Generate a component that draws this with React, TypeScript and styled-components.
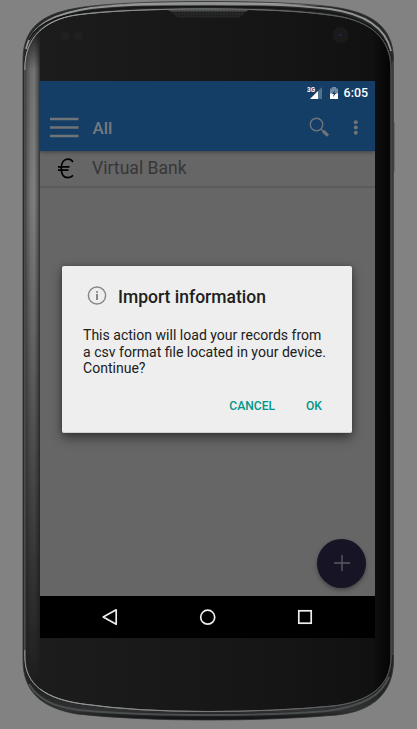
import React from "react";
import styled, { createGlobalStyle } from "styled-components";

const GlobalStyle = createGlobalStyle`
  *, *::before, *::after { box-sizing: border-box; }
  body { margin: 0; background: #828282; overflow: hidden; }
`;

const Stage = styled.main`
  position: relative;
  width: 417px;
  height: 729px;
  padding: 81px 42px 91px 40px;
  background: #828282;
  font-family: Roboto, "Liberation Sans", sans-serif;
`;

const PhoneShell = styled.svg`
  position: absolute;
  inset: 0;
`;

const Screen = styled.div`
  position: relative;
  display: flex;
  flex-direction: column;
  width: 335px;
  height: 557px;
  background: #666;
  overflow: hidden;
`;

const StatusBar = styled.div`
  display: flex;
  justify-content: flex-end;
  align-items: center;
  height: 23px;
  flex: none;
  padding-right: 7px;
  background: #153e66;
  color: #fff;
  font-size: 12.4px;
  font-weight: 500;
  z-index: 2;
`;

const StatusIcons = styled.svg`
  margin-right: 3px;
`;

const AppBar = styled.header`
  display: flex;
  align-items: center;
  height: 47px;
  flex: none;
  padding: 0 14px 0 10px;
  background: #153e66;
  box-shadow: 0 1px 4px rgba(0, 0, 0, 0.4);
  color: #6f7479;
  z-index: 1;
`;

const BarTitle = styled.h1`
  flex: 1;
  margin: 0 0 0 13.5px;
  font-size: 17px;
  line-height: 20px;
  font-weight: 500;
  color: #75797e;
`;

const IconButton = styled.button<{ $gap?: number }>`
  display: flex;
  padding: 0;
  border: 0;
  margin-left: ${({ $gap }) => $gap ?? 0}px;
  background: none;
  color: inherit;
`;

const AccountRow = styled.div`
  display: flex;
  align-items: center;
  height: 37px;
  flex: none;
  padding: 0 0 1px 17px;
  border-bottom: 2px solid #5b5b5b;
  color: #373737;
`;

const AccountName = styled.span`
  margin-left: 17px;
  font-size: 17.6px;
  line-height: 20px;
`;

const Content = styled.section`
  display: flex;
  flex: 1;
  flex-direction: column;
`;

const AddButton = styled.button`
  display: grid;
  place-items: center;
  width: 49px;
  height: 49px;
  margin: auto 9px 8.5px auto;
  padding: 0;
  border: 0;
  border-radius: 50%;
  background: #171425;
  box-shadow: 0 2px 4px rgba(0, 0, 0, 0.35);
`;

const NavBar = styled.nav`
  display: flex;
  align-items: center;
  justify-content: space-between;
  height: 42px;
  flex: none;
  padding: 0 61px;
  background: #000;
`;

const Dialog = styled.div`
  position: absolute;
  top: 185px;
  left: 22px;
  z-index: 2;
  display: flex;
  flex-direction: column;
  width: 290px;
  height: 167px;
  padding: 18px 22px 17.5px 21px;
  border-radius: 2px;
  border-bottom: 1px solid #d0d0d0;
  background: #eee;
  box-shadow: 0 5px 12px rgba(0, 0, 0, 0.45), 0 0 5px rgba(0, 0, 0, 0.22);
`;

const DialogHeader = styled.div`
  display: flex;
  align-items: center;
  height: 22px;
  padding-left: 4px;
`;

const DialogTitle = styled.h2`
  margin: 3px 0 0 11px;
  font-size: 17.5px;
  line-height: 20px;
  font-weight: 500;
  color: #202020;
  white-space: nowrap;
`;

const Message = styled.p`
  margin: 21px 0 0;
  font-size: 14.05px;
  line-height: 16.6px;
  color: #202020;
  white-space: nowrap;
`;

const Actions = styled.div`
  display: flex;
  justify-content: flex-end;
  gap: 31px;
  margin-top: auto;
  padding-right: 8px;
`;

const ActionButton = styled.button`
  padding: 0;
  border: 0;
  background: none;
  font: 500 12.1px/18px Roboto, sans-serif;
  color: #009688;
`;

const OUTER =
  "M23 100V60C23 24 47 12 84 7Q125 1.5 208 1.5Q291 1.5 333 7C369 12 393.5 25 393.5 60V661C393 692 374 711 337 715Q280 720 208 720Q132 720 77 714C42 708 23 692 23 660Z";
const INNER =
  "M25 100V68C25 38 44 20 76 15Q120 9 208 9Q292 9 336 16C371 21 391 39 391 69V657C391 687 368 702 333 706Q275 711.5 208 711.5Q135 711.5 83 704C46 699 25 685 25 657Z";

function Phone() {
  return (
    <PhoneShell width="417" height="729" viewBox="0 0 417 729" aria-hidden="true">
      <defs>
        <linearGradient id="rim" x1="0" y1="0" x2="0" y2="729" gradientUnits="userSpaceOnUse">
          <stop offset="0" stopColor="#4b4c4b" />
          <stop offset=".005" stopColor="#a4a5a3" />
          <stop offset=".009" stopColor="#252625" />
          <stop offset=".04" stopColor="#272828" />
          <stop offset=".95" stopColor="#222424" />
          <stop offset=".975" stopColor="#303233" />
          <stop offset=".99" stopColor="#080909" />
        </linearGradient>
        <linearGradient id="face" x1="24" x2="393" y1="0" y2="0" gradientUnits="userSpaceOnUse">
          <stop offset="0" stopColor="#1d1e1e" />
          <stop offset=".05" stopColor="#1c1c1c" />
          <stop offset=".7" stopColor="#151515" />
          <stop offset=".94" stopColor="#111" />
          <stop offset="1" stopColor="#030303" />
        </linearGradient>
        <linearGradient id="sheen" x1="25" x2="40" y1="0" y2="0" gradientUnits="userSpaceOnUse">
          <stop offset="0" stopColor="#4b4c4c" />
          <stop offset=".15" stopColor="#626363" />
          <stop offset=".4" stopColor="#808181" />
          <stop offset=".62" stopColor="#888989" />
          <stop offset=".85" stopColor="#5e5f5f" />
          <stop offset="1" stopColor="#303030" />
        </linearGradient>
        <linearGradient id="shade" x1="0" x2="0" y1="30" y2="690" gradientUnits="userSpaceOnUse">
          <stop offset="0" stopColor="#1c1c1c" />
          <stop offset=".06" stopColor="#1c1c1c" stopOpacity=".2" />
          <stop offset=".25" stopColor="#1c1c1c" stopOpacity=".08" />
          <stop offset=".48" stopColor="#1c1c1c" stopOpacity=".35" />
          <stop offset=".8" stopColor="#1c1c1c" stopOpacity=".75" />
          <stop offset="1" stopColor="#1c1c1c" />
        </linearGradient>
        <linearGradient id="line" x1="24" y1="0" x2="393" y2="0" gradientUnits="userSpaceOnUse">
          <stop offset="0" stopColor="#a5a7a5" />
          <stop offset=".5" stopColor="#777a7b" />
          <stop offset="1" stopColor="#505252" />
        </linearGradient>
        <clipPath id="faceClip"><path d={INNER} /></clipPath>
        <pattern id="mesh" width="3" height="3" patternUnits="userSpaceOnUse">
          <rect width="3" height="3" fill="#242524" />
          <path d="M0 0h1v1H0z" fill="#181818" />
        </pattern>
      </defs>
      <rect x="391.5" y="122" width="2.8" height="50" rx="1" fill="#333" />
      <path d={OUTER} fill="url(#rim)" stroke="#303131" strokeWidth=".8" />
      <path d="M26 49C32 23 57 13 91 8Q132 3.5 208 3.5Q285 3.5 330 9C366 14 386 29 391 51" fill="none" stroke="#949694" strokeWidth="1.8" />
      <path d="M29 40C39 20 65 14 97 10.5Q135 6.5 208 6.5Q284 6.5 328 12C363 18 382 30 389 50" fill="none" stroke="#141515" strokeWidth="1.6" />
      <path d="M29 684C40 703 61 709 90 711Q140 715 208 715Q278 715 327 711C363 706 381 696 389 677" fill="none" stroke="#4b4e4f" strokeWidth="2" />
      <path d={INNER} fill="url(#face)" stroke="url(#line)" strokeWidth="1" />
      <g clipPath="url(#faceClip)">
        <rect x="25" y="30" width="15" height="660" fill="url(#sheen)" />
        <rect x="25" y="30" width="15" height="660" fill="url(#shade)" />
        <path d="M168 9H249L245 12Q242 17.5 237 17.5H181Q175 17.5 173 13Z" fill="url(#mesh)" />
        <path d="M165 9H251L246 11.5H171Z" fill="#4a4c4c" />
      </g>
      <path d={INNER} fill="none" stroke="url(#line)" strokeWidth=".8" />
      <path d="M25 70V650" stroke="#2b2c2c" strokeWidth="1.2" />
      <path d="M23.5 60V655" stroke="#292a29" strokeWidth="1" />
      <path d="M393 61V655" stroke="#525353" strokeWidth="1" />
      <circle cx="65" cy="35.5" r="4.5" fill="#202020" />
      <circle cx="78.5" cy="35.5" r="4.5" fill="#202020" />
      <circle cx="340.5" cy="35" r="8" fill="#1a1a1b" />
      <circle cx="340.5" cy="35" r="3" fill="#191922" />
      <circle cx="340.5" cy="35" r="1.2" fill="#292647" />
    </PhoneShell>
  );
}

export default function App() {
  return (
    <>
      <GlobalStyle />
      <Stage>
        <Phone />
        <Screen>
          <StatusBar>
            <StatusIcons width="34" height="16" viewBox="0 0 34 16">
              <text x="0" y="7" fontSize="7.5" fontWeight="700" fill="#fff" textLength="8" lengthAdjust="spacingAndGlyphs">3G</text>
              <path d="M3 14 15 2v12Z" fill="#53718e" />
              <path d="M3 14 11 6v8Z" fill="#fff" />
              <path d="M25 2h4v1.5h2V14h-8V3.5h2Z" fill="#718aa2" />
              <path d="M23 8.5h8V14h-8Z" fill="#fff" />
              <path d="M28 5 25 9h1.8L26 12l3.3-4h-2Z" fill="#153e66" />
            </StatusIcons>
            <span>6:05</span>
          </StatusBar>
          <AppBar>
            <IconButton aria-label="Menu">
              <svg width="29" height="22" viewBox="0 0 29 22">
                <path d="M0 2h28.5M0 10.5h28.5M0 19h28.5" stroke="currentColor" strokeWidth="2.3" />
              </svg>
            </IconButton>
            <BarTitle>All</BarTitle>
            <IconButton aria-label="Search">
              <svg width="21" height="21" viewBox="0 0 21 21" fill="none" stroke="currentColor">
                <circle cx="7.5" cy="7.5" r="6.2" strokeWidth="1.4" />
                <path d="m12 12 3 3" strokeWidth="1.5" />
                <path d="m14 14 5 4.7" strokeWidth="3.2" />
              </svg>
            </IconButton>
            <IconButton aria-label="More options" $gap={21}>
              <svg width="10" height="16" viewBox="0 0 10 16" fill="currentColor">
                <circle cx="4.8" cy="2.2" r="2" /><circle cx="4.8" cy="7.5" r="2" /><circle cx="4.8" cy="12.8" r="2" />
              </svg>
            </IconButton>
          </AppBar>
          <AccountRow>
            <svg width="18" height="22" viewBox="0 0 18 22" fill="none" stroke="#000" strokeWidth="1.7">
              <path d="M16 5C14.6 3 13 2.2 11 2.2 7 2.2 4.3 5.5 4.3 11.4s2.7 9.2 6.7 9.2c2 0 3.6-.6 5-2.2M1 9.8h11.5M1 13.2h10.5" />
            </svg>
            <AccountName>Virtual Bank</AccountName>
          </AccountRow>
          <Content>
            <AddButton aria-label="Add">
              <svg width="16" height="16" viewBox="0 0 16 16"><path d="M8 0v16M0 8h16" stroke="#5b5963" strokeWidth="1.4" /></svg>
            </AddButton>
          </Content>
          <NavBar>
            <IconButton aria-label="Back">
              <svg width="18" height="18" viewBox="0 0 18 18" fill="none" stroke="#eee" strokeWidth="1.7" strokeLinejoin="round"><path d="M15.2 1.8v14.4L2.2 9Z" /></svg>
            </IconButton>
            <IconButton aria-label="Home">
              <svg width="18" height="18" viewBox="0 0 18 18" fill="none" stroke="#eee" strokeWidth="1.7"><circle cx="8.7" cy="9.2" r="7" /></svg>
            </IconButton>
            <IconButton aria-label="Recent apps">
              <svg width="18" height="18" viewBox="0 0 18 18" fill="none" stroke="#eee" strokeWidth="1.7"><rect x="2.8" y="2.8" width="12.4" height="12.4" /></svg>
            </IconButton>
          </NavBar>
          <Dialog role="dialog" aria-labelledby="dialog-title">
            <DialogHeader>
              <svg width="20" height="20" viewBox="0 0 20 20" fill="none">
                <circle cx="10" cy="10.5" r="8.6" stroke="#888" strokeWidth="1.5" />
                <circle cx="10" cy="7" r="1.1" fill="#888" /><path d="M10 9v6" stroke="#888" strokeWidth="2" />
              </svg>
              <DialogTitle id="dialog-title">Import information</DialogTitle>
            </DialogHeader>
            <Message>
              This action will load your records from<br />
              a csv format file located in your device.<br />
              Continue?
            </Message>
            <Actions><ActionButton>CANCEL</ActionButton><ActionButton>OK</ActionButton></Actions>
          </Dialog>
        </Screen>
      </Stage>
    </>
  );
}
